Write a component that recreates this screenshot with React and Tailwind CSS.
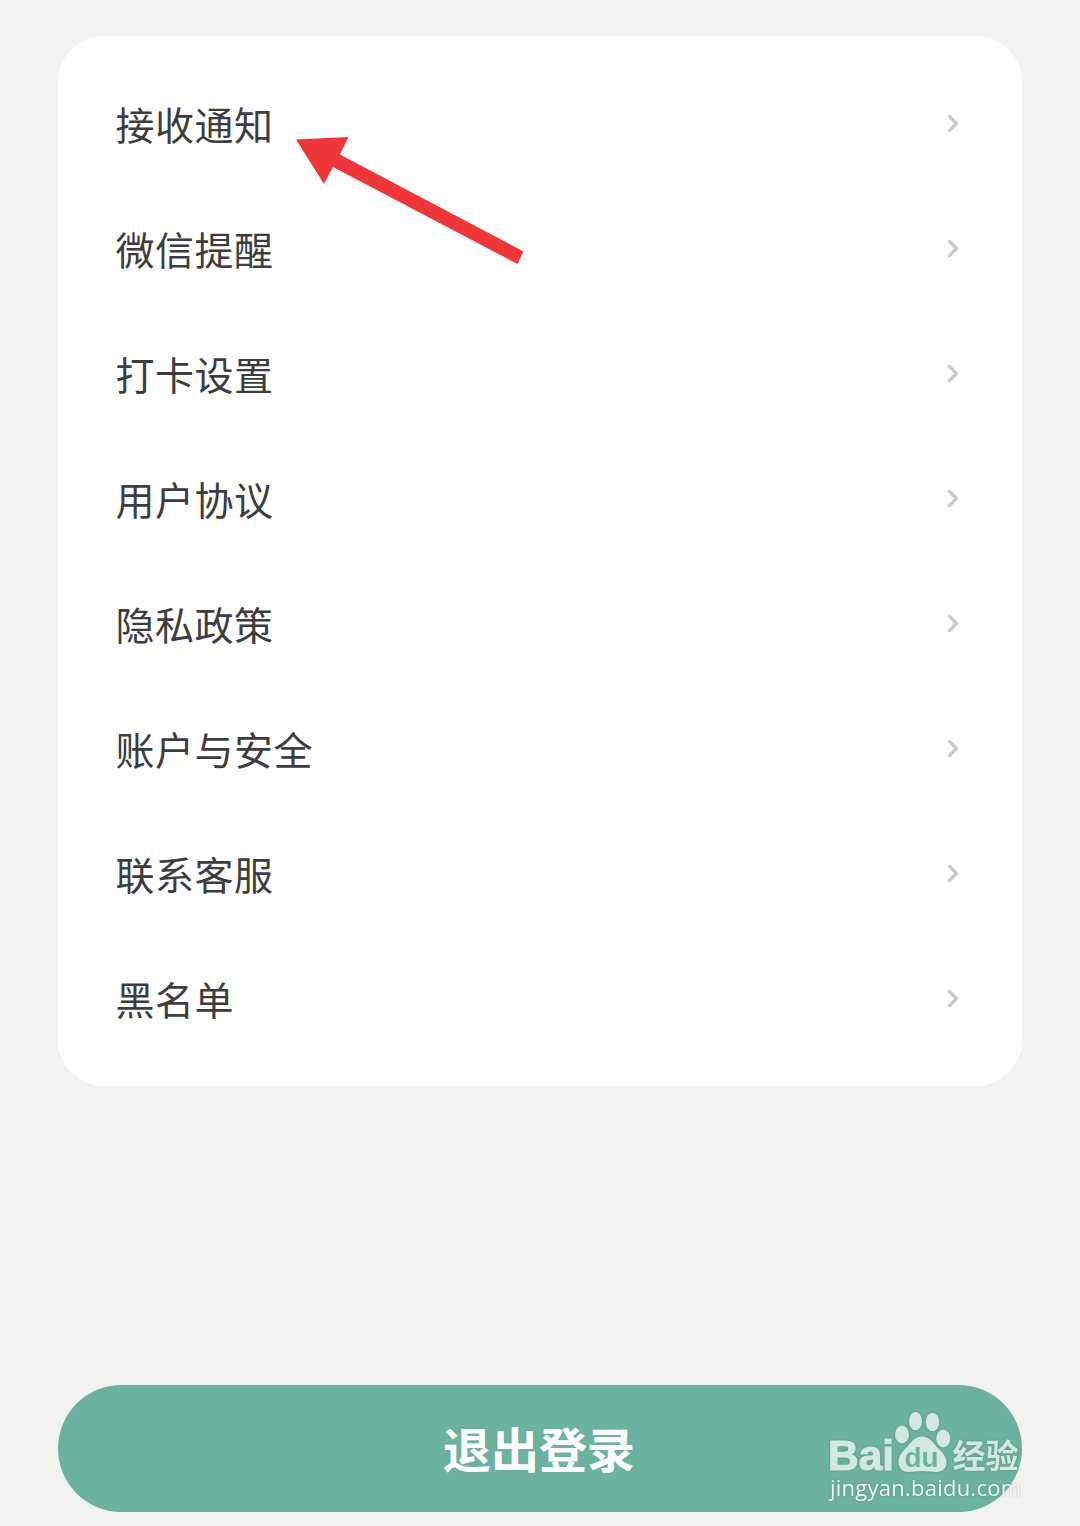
import React from "react";

const MENU_ITEMS = [
  "接收通知",
  "微信提醒",
  "打卡设置",
  "用户协议",
  "隐私政策",
  "账户与安全",
  "联系客服",
  "黑名单",
];

function ChevronIcon() {
  return (
    <svg width="14" height="20" viewBox="0 0 14 20" fill="none">
      <path
        d="M3.500 2.500L10.500 9.500L3.500 16.500"
        stroke="#c9c9c9"
        strokeWidth="3.200"
        strokeLinecap="round"
        strokeLinejoin="round"
      />
    </svg>
  );
}

function MenuRow({ label }) {
  return (
    <button className="flex h-[125px] w-full items-center justify-between pr-[62px] pl-[57.5px] text-left">
      <span className="pt-1.5 text-[39px] leading-none tracking-[0.5px] text-[#3d3d3d]">
        {label}
      </span>
      <ChevronIcon />
    </button>
  );
}

function PointerArrow() {
  return (
    <svg
      className="pointer-events-none absolute top-[130px] left-[290px]"
      width="240"
      height="140"
      viewBox="290 130 240 140"
    >
      <path
        d="M296 139.500L348.500 137L340 154.500L523.500 251.500L517.500 264L333 167L324 184Z"
        fill="#ef3639"
      />
    </svg>
  );
}

function Watermark() {
  return (
    <svg
      className="pointer-events-none absolute top-[1400px] left-[820px] drop-shadow-[0_0_1px_rgba(60,90,80,0.45)]"
      width="210"
      height="110"
      viewBox="820 1400 210 110"
      fill="#d4e8e2"
    >
      <text
        x="828"
        y="1470"
        textLength="66"
        lengthAdjust="spacingAndGlyphs"
        stroke="#d4e8e2"
        strokeWidth="1.200"
        className="font-['Liberation_Sans'] text-[43px] font-bold"
      >
        Bai
      </text>
      <ellipse cx="902" cy="1434.500" rx="7" ry="9" />
      <ellipse cx="915.500" cy="1421" rx="6.500" ry="9.200" />
      <ellipse cx="932.500" cy="1422" rx="6.800" ry="9.200" />
      <ellipse cx="943.300" cy="1438.500" rx="7" ry="9" />
      <path d="M922 1436.500C914 1436.500 910 1444 905.500 1448.500C901 1453 898.500 1457 898.500 1462C898.500 1468 902 1472 909 1472C914 1472 917 1471 922 1471C927 1471 931 1472 936 1472C943 1472 946.500 1468 946.500 1462C946.500 1457 943 1453 938.500 1448.500C934 1444 930 1436.500 922 1436.500Z" />
      <text
        x="904.500"
        y="1466.500"
        fill="#6bb29f"
        textLength="34"
        lengthAdjust="spacingAndGlyphs"
        className="font-['Liberation_Sans'] text-[27px] font-bold"
      >
        du
      </text>
      <text
        x="952.500"
        y="1467.500"
        textLength="66"
        className="font-['Noto_Sans_CJK_SC'] text-[33px] font-bold"
      >
        经验
      </text>
      <text
        x="830"
        y="1496"
        fill="#f0f8f5"
        textLength="191"
        className="font-['Open_Sans'] text-[22px]"
      >
        jingyan.baidu.com
      </text>
    </svg>
  );
}

function App() {
  return (
    <main className="relative flex h-[1526px] w-[1080px] flex-col overflow-hidden bg-[#f2f3ef] px-[58px] pt-9 font-['Liberation_Sans','Noto_Sans_CJK_SC',sans-serif]">
      <section className="rounded-[46px] bg-white py-[25px]">
        {MENU_ITEMS.map((label) => (
          <MenuRow key={label} label={label} />
        ))}
      </section>

      <button className="mt-[299px] flex h-[127px] w-full items-center justify-center rounded-full bg-[#6bb29f] pt-[7px] pr-[2px] text-[48px] leading-none font-bold text-white">
        退出登录
      </button>

      <PointerArrow />
      <Watermark />
    </main>
  );
}

export default App;
